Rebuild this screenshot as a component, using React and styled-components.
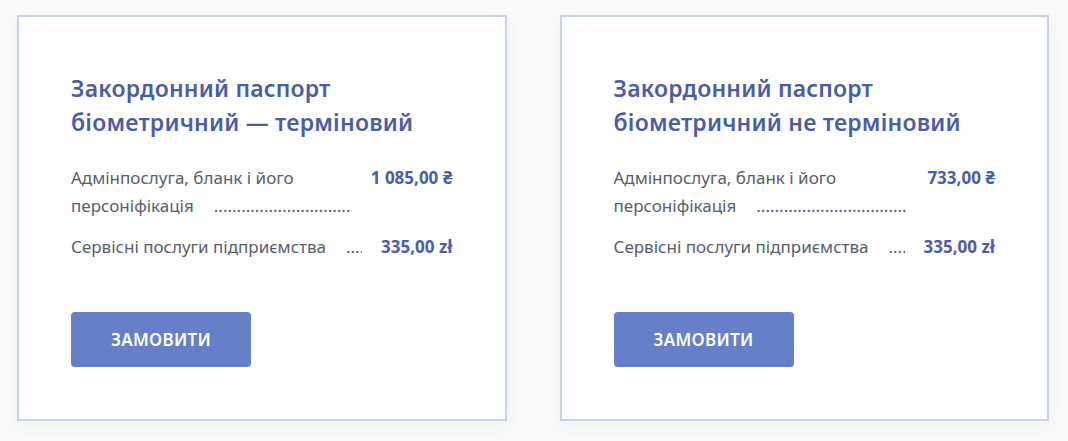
import React from "react"
import styled, { createGlobalStyle } from "styled-components"

const GlobalStyle = createGlobalStyle`
  body {
    margin: 0;
    background: #fafafb;
    font-family: "Noto Sans", "Open Sans", Arial, sans-serif;
  }
`

const services = [
  {
    title: "Закордонний паспорт біометричний — терміновий",
    items: [
      { label: "Адмінпослуга, бланк і його персоніфікація", price: "1 085,00 ₴" },
      { label: "Сервісні послуги підприємства", price: "335,00 zł" },
    ],
  },
  {
    title: "Закордонний паспорт біометричний не терміновий",
    items: [
      { label: "Адмінпослуга, бланк і його персоніфікація", price: "733,00 ₴" },
      { label: "Сервісні послуги підприємства", price: "335,00 zł" },
    ],
  },
]

const DOTS = ".".repeat(120)

const App = () => {
  return (
    <>
      <GlobalStyle />
      <Wrapper>
        {services.map((service) => (
          <Card key={service.title}>
            <Title>{service.title}</Title>
            <PriceList>
              {service.items.map((item) => (
                <PriceRow key={item.label}>
                  <Label>
                    {item.label}
                    <Dots>{DOTS}</Dots>
                  </Label>
                  <Price>{item.price}</Price>
                </PriceRow>
              ))}
            </PriceList>
            <OrderButton type="button">Замовити</OrderButton>
          </Card>
        ))}
      </Wrapper>
    </>
  )
}
export default App

const Wrapper = styled.div`
  display: flex;
  gap: 53px;
  padding: 15px 19px 20px 17px;
`

const Card = styled.div`
  flex: 1;
  display: flex;
  flex-direction: column;
  align-items: flex-start;
  background: #ffffff;
  border: 2px solid #c8d1f2;
  box-shadow: 0 6px 16px rgba(40, 50, 90, 0.05);
  padding: 54px 52px 52px 52px;
`

const Title = styled.h3`
  margin: 0 0 25px 0;
  font-size: 23px;
  line-height: 34px;
  font-weight: 600;
  letter-spacing: 0.2px;
  color: #4a5ea6;
`

const PriceList = styled.div`
  display: flex;
  flex-direction: column;
  gap: 13px;
  align-self: stretch;
`

const PriceRow = styled.div`
  display: flex;
  align-items: flex-start;
  font-size: 17px;
  line-height: 28px;
`

const Label = styled.div`
  flex: 1;
  min-width: 0;
  overflow: hidden;
  color: #565e6e;
`

const Dots = styled.span`
  display: inline-block;
  width: 0;
  white-space: nowrap;
  text-indent: 20px;
`

const Price = styled.div`
  flex: none;
  margin-left: 19px;
  white-space: nowrap;
  font-weight: 700;
  color: #4a5ea6;
`

const OrderButton = styled.button`
  margin-top: 51px;
  width: 180px;
  height: 55px;
  border: none;
  border-radius: 4px;
  background: #6580c9;
  color: #ffffff;
  font-family: inherit;
  font-size: 17px;
  font-weight: 600;
  letter-spacing: 0.3px;
  text-transform: uppercase;
  cursor: pointer;
`
